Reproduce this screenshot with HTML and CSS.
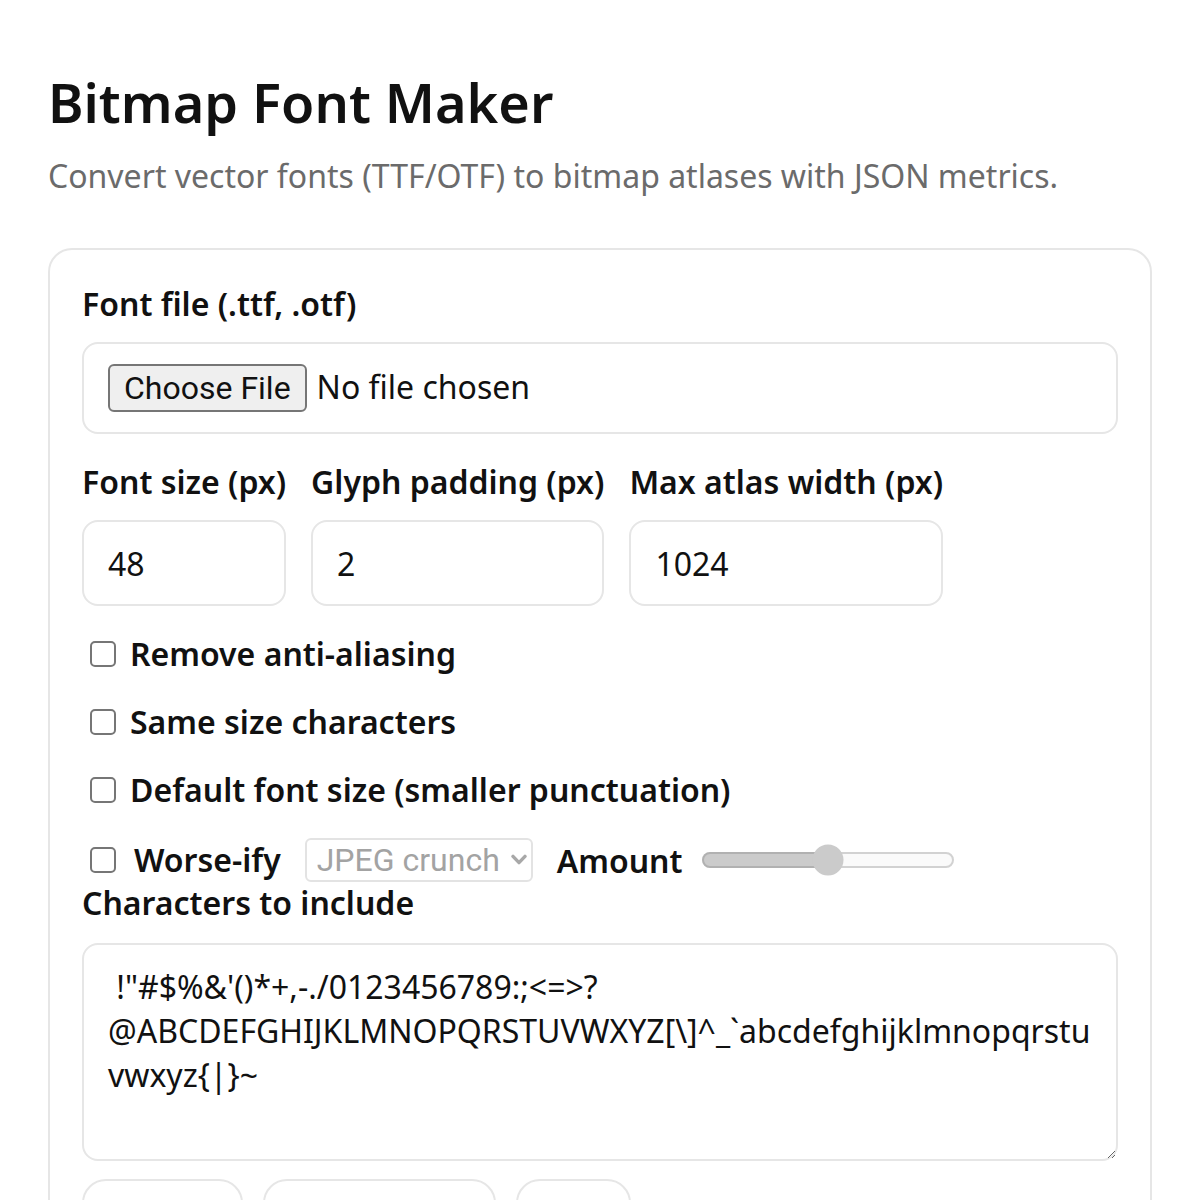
FILE: index.html
```html
<!DOCTYPE html>
<html lang="en">
<head>
<meta charset="utf-8">
<title>Bitmap Font Maker</title>
<link rel="stylesheet" href="styles.css">
</head>
<body>
<main class="page">
  <h1 class="title">Bitmap Font Maker</h1>
  <p class="subtitle">Convert vector fonts (TTF/OTF) to bitmap atlases with JSON metrics.</p>
  <section class="card">
    <div class="field">
      <label class="label" for="font-file">Font file (.ttf, .otf)</label>
      <div class="file-box"><input class="file-input" id="font-file" type="file" accept=".ttf,.otf"></div>
    </div>
    <div class="row">
      <div class="field col">
        <label class="label" for="size">Font size (px)</label>
        <input class="text-input" id="size" type="text" value="48">
      </div>
      <div class="field col">
        <label class="label" for="pad">Glyph padding (px)</label>
        <input class="text-input" id="pad" type="text" value="2">
      </div>
      <div class="field col">
        <label class="label" for="maxw">Max atlas width (px)</label>
        <input class="text-input" id="maxw" type="text" value="1024">
      </div>
    </div>
    <div class="options">
      <label class="check"><input type="checkbox"> Remove anti-aliasing</label>
      <label class="check"><input type="checkbox"> Same size characters</label>
      <label class="check"><input type="checkbox"> Default font size (smaller punctuation)</label>
    </div>
    <div class="worse">
      <label class="check check-worse"><input type="checkbox"> Worse-ify</label>
      <span class="select-wrap">
        <select class="select" disabled><option>JPEG crunch</option></select>
        <svg class="chevron" viewBox="0 0 8 6" width="8" height="6" aria-hidden="true"><path d="M1 1.2 L4 4.3 L7 1.2" fill="none" stroke="#a8a8a8" stroke-width="1.7" stroke-linecap="round" stroke-linejoin="round"/></svg>
      </span>
      <label class="amount">Amount <input class="range" type="range" min="0" max="100" value="50" disabled></label>
    </div>
    <div class="field">
      <label class="label label-chars" for="chars">Characters to include</label>
      <textarea class="textarea" id="chars" spellcheck="false"> !"#$%&amp;'()*+,-./0123456789:;&lt;=&gt;?@ABCDEFGHIJKLMNOPQRSTUVWXYZ[\]^_`abcdefghijklmnopqrstuvwxyz{|}~</textarea>
    </div>
    <div class="actions">
      <button class="btn" type="button">Generate</button>
      <button class="btn" type="button">Download PNG</button>
      <button class="btn" type="button">Reset</button>
    </div>
  </section>
</main>
</body>
</html>
```
FILE: styles.css
```css
html {
  zoom: 2;
}
body {
  margin: 0;
  padding: 24px;
  font-family: "Noto Sans", sans-serif;
  color: #111;
  background: #fff;
}
.title {
  margin: 8px 0 0;
  font-size: 27px;
  line-height: 38px;
  font-weight: 600;
}
.subtitle {
  margin: 7px 0 25px;
  font-size: 16px;
  line-height: 22px;
  color: #6b6b6b;
}
.card {
  border: 1px solid #e6e6e6;
  border-radius: 12px;
  padding: 16px;
}
.field {
  display: flex;
  flex-direction: column;
}
.label {
  font-size: 16px;
  line-height: 22px;
  font-weight: 600;
  margin-bottom: 8px;
}
.file-box {
  border: 1px solid #e6e6e6;
  border-radius: 8px;
  padding: 10px 12px;
  display: flex;
  align-items: center;
}
.file-input {
  font-family: "Noto Sans", sans-serif;
  font-size: 16px;
  color: #111;
}
.file-input::file-selector-button {
  font-family: Roboto, sans-serif;
  font-size: 16px;
  line-height: 18px;
  padding: 2px 7px;
  margin-right: 5px;
  border: 1px solid #767676;
  border-radius: 3px;
  background: #efefef;
  color: #111;
}
.row {
  display: flex;
  gap: 12.5px;
  margin-top: 13px;
}
.col {
  flex: none;
}
.col .label {
  margin-bottom: 8px;
}
.text-input {
  width: 0;
  min-width: 100%;
  box-sizing: border-box;
  height: 43px;
  font-family: "Noto Sans", sans-serif;
  font-size: 16px;
  line-height: 21px;
  padding: 10px 12px;
  border: 1px solid #e6e6e6;
  border-radius: 8px;
  color: #111;
  outline: none;
}
.options {
  display: flex;
  flex-direction: column;
  gap: 14px;
  margin-top: 14px;
}
.check {
  display: flex;
  align-items: center;
  gap: 4px;
  font-size: 16px;
  line-height: 20px;
  font-weight: 600;
}
.check input {
  margin: 3px 3px 3px 4px;
}
.worse {
  display: flex;
  align-items: center;
  gap: 12px;
  height: 22px;
  margin-top: 14px;
}
.check-worse {
  gap: 6px;
}
.select-wrap {
  position: relative;
  display: inline-flex;
}
.select {
  appearance: none;
  -webkit-appearance: none;
  font-family: Roboto, sans-serif;
  font-size: 16px;
  line-height: 20px;
  height: 22px;
  padding: 0 15px 0 5px;
  border: 1px solid #e3e3e3;
  border-radius: 3px;
  background: #fff;
  color: #a3a3a3;
  opacity: 1;
}
.chevron {
  position: absolute;
  right: 3px;
  top: 8px;
  pointer-events: none;
}
.amount {
  display: flex;
  align-items: center;
  gap: 7px;
  font-size: 16px;
  font-weight: 600;
}
.range {
  width: 127px;
  margin: 0 2px;
}
.label-chars {
  margin-top: -0.5px;
  margin-bottom: 9px;
}
.textarea {
  box-sizing: border-box;
  height: 109px;
  font-family: "Noto Sans", sans-serif;
  font-size: 16px;
  line-height: 22px;
  padding: 10px 12px;
  border: 1px solid #e6e6e6;
  border-radius: 8px;
  color: #111;
  resize: vertical;
  outline: none;
}
.actions {
  display: flex;
  gap: 10px;
  margin-top: 9px;
}
.btn {
  font-family: "Noto Sans", sans-serif;
  font-size: 13px;
  line-height: 20px;
  padding: 12px 11px;
  border: 1px solid #e6e6e6;
  border-radius: 12px;
  background: #fff;
  color: #111;
}
```
